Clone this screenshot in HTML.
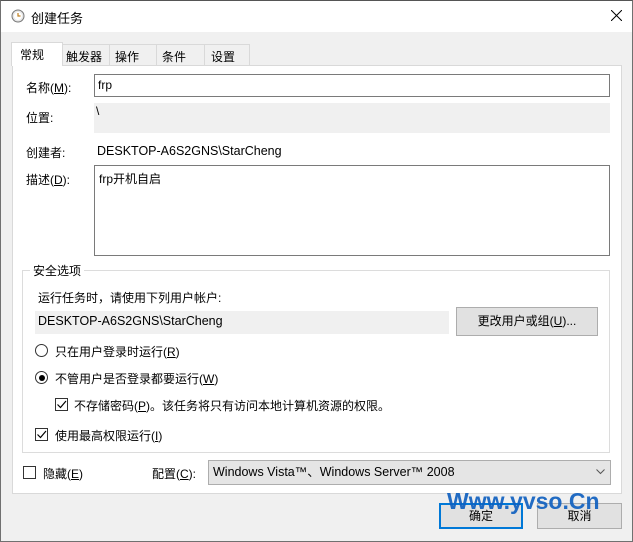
<!DOCTYPE html>
<html><head><meta charset="utf-8"><style>
*{margin:0;padding:0;box-sizing:border-box}
body{width:633px;height:542px;overflow:hidden;background:#fff;font-family:"Liberation Sans","Microsoft YaHei","Noto Sans CJK SC",sans-serif;font-size:12px;color:#000;position:relative}
.a{position:absolute;white-space:nowrap}
u{text-decoration:underline}
</style></head><body>
<div class="a" style="left:0;top:0;width:633px;height:542px;border:1px solid #707070;border-top-color:#555;background:#f0f0f0"></div>
<div class="a" style="left:1px;top:1px;width:631px;height:31px;background:#fff"></div>
<svg class="a" style="left:11px;top:9px" width="14" height="14"><circle cx="7" cy="7" r="6" fill="#e8e8e8" stroke="#777"/><circle cx="7" cy="7" r="4" fill="#fff"/><path d="M7 4V7H9.5" stroke="#c08020" stroke-width="1.2" fill="none"/></svg>
<div class="a" style="left:31px;top:8px;font-size:13px">创建任务</div>
<svg class="a" style="left:611px;top:10px" width="11" height="11"><path d="M0 0L11 11M11 0L0 11" stroke="#000" stroke-width="1"/></svg>
<div class="a" style="left:12px;top:65px;width:610px;height:429px;background:#fff;border:1px solid #d9d9d9"></div>
<div class="a" style="left:62px;top:44px;width:188px;height:21px;background:#f0f0f0;border:1px solid #d9d9d9;border-bottom:none"></div>
<div class="a" style="left:109px;top:44px;height:21px;border-left:1px solid #d9d9d9"></div>
<div class="a" style="left:156px;top:44px;height:21px;border-left:1px solid #d9d9d9"></div>
<div class="a" style="left:204px;top:44px;height:21px;border-left:1px solid #d9d9d9"></div>
<div class="a" style="left:11px;top:42px;width:52px;height:24px;background:#fff;border:1px solid #d9d9d9;border-bottom:none"></div>
<div class="a" style="left:20px;top:46px">常规</div>
<div class="a" style="left:66px;top:48px">触发器</div>
<div class="a" style="left:115px;top:48px">操作</div>
<div class="a" style="left:162px;top:48px">条件</div>
<div class="a" style="left:211px;top:48px">设置</div>
<div class="a" style="left:26px;top:79px">名称(<u>M</u>):</div>
<div class="a" style="left:94px;top:74px;width:516px;height:23px;border:1px solid #7a7a7a;padding:3px 3px">frp</div>
<div class="a" style="left:26px;top:109px">位置:</div>
<div class="a" style="left:94px;top:103px;width:516px;height:30px;background:#f0f0f0;padding:1px 2px">\</div>
<div class="a" style="left:26px;top:144px">创建者:</div>
<div class="a" style="left:97px;top:144px;font-size:12.5px">DESKTOP-A6S2GNS\StarCheng</div>
<div class="a" style="left:26px;top:171px">描述(<u>D</u>):</div>
<div class="a" style="left:94px;top:165px;width:516px;height:91px;border:1px solid #7a7a7a;padding:4px 4px">frp开机自启</div>
<div class="a" style="left:22px;top:270px;width:588px;height:183px;border:1px solid #dcdcdc"></div>
<div class="a" style="left:30px;top:262px;background:#fff;padding:0 3px">安全选项</div>
<div class="a" style="left:38px;top:289px">运行任务时，请使用下列用户帐户:</div>
<div class="a" style="left:35px;top:311px;width:414px;height:23px;background:#f0f0f0;padding:3px 3px;font-size:12.5px">DESKTOP-A6S2GNS\StarCheng</div>
<div class="a" style="left:456px;top:307px;width:142px;height:29px;background:#e1e1e1;border:1px solid #adadad;text-align:center;line-height:27px">更改用户或组(<u>U</u>)...</div>
<div class="a" style="left:35px;top:344px;width:13px;height:13px;border:1px solid #333;border-radius:50%"></div>
<div class="a" style="left:55px;top:343px">只在用户登录时运行(<u>R</u>)</div>
<div class="a" style="left:35px;top:371px;width:13px;height:13px;border:1px solid #333;border-radius:50%"><div style="margin:2.5px;width:6px;height:6px;border-radius:50%;background:#000"></div></div>
<div class="a" style="left:55px;top:370px">不管用户是否登录都要运行(<u>W</u>)</div>
<div class="a" style="left:55px;top:398px;width:13px;height:13px;border:1px solid #333"><svg width="11" height="11" style="display:block"><path d="M1.5 5.5L4.5 8.5L10 2" stroke="#000" fill="none" stroke-width="1.2"/></svg></div>
<div class="a" style="left:74px;top:397px">不存储密码(<u>P</u>)。该任务将只有访问本地计算机资源的权限。</div>
<div class="a" style="left:35px;top:428px;width:13px;height:13px;border:1px solid #333"><svg width="11" height="11" style="display:block"><path d="M1.5 5.5L4.5 8.5L10 2" stroke="#000" fill="none" stroke-width="1.2"/></svg></div>
<div class="a" style="left:55px;top:427px">使用最高权限运行(<u>I</u>)</div>
<div class="a" style="left:23px;top:466px;width:13px;height:13px;border:1px solid #333;background:#fff"></div>
<div class="a" style="left:43px;top:465px">隐藏(<u>E</u>)</div>
<div class="a" style="left:152px;top:465px">配置(<u>C</u>):</div>
<div class="a" style="left:208px;top:460px;width:403px;height:25px;background:#e5e5e5;border:1px solid #adadad;padding:1px 4px;line-height:21px;font-size:12.5px">Windows Vista™、Windows Server™ 2008</div>
<svg class="a" style="left:596px;top:469px" width="9" height="6"><path d="M0.5 0.5L4.5 4.5L8.5 0.5" stroke="#555" fill="none"/></svg>
<div class="a" style="left:439px;top:503px;width:84px;height:26px;background:#e1e1e1;border:2px solid #0078d7;text-align:center;line-height:22px">确定</div>
<div class="a" style="left:537px;top:503px;width:85px;height:26px;background:#e1e1e1;border:1px solid #adadad;text-align:center;line-height:24px">取消</div>
<div class="a" style="left:447px;top:488px;font-size:23px;font-weight:bold;color:#1060c0;opacity:.92">Www.yvso.Cn</div>
</body></html>
